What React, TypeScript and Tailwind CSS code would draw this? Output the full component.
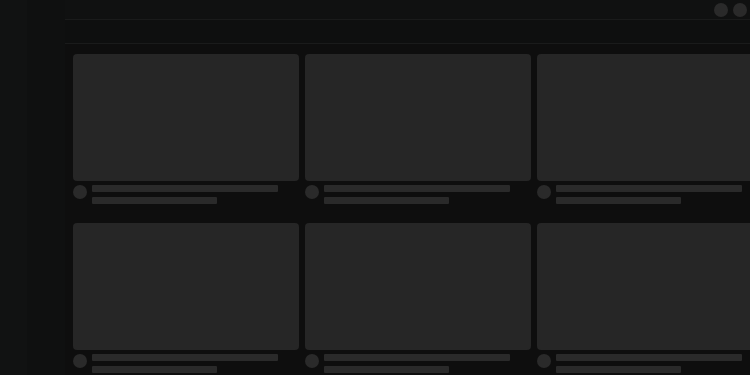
import React from 'react';

const SkeletonCard: React.FC = () => (
  <div className="flex flex-col">
    <div className="h-[127px] rounded-[4px] bg-[#262626]" />
    <div className="mt-[4px] flex gap-[5px]">
      <div className="h-[14px] w-[14px] shrink-0 rounded-full bg-[#2a2a2a]" />
      <div className="flex flex-1 flex-col gap-[5px] pr-[21px]">
        <div className="h-[7px] w-full rounded-[1px] bg-[#2a2a2a]" />
        <div className="h-[7px] w-[125px] rounded-[1px] bg-[#2a2a2a]" />
      </div>
    </div>
  </div>
);

const App: React.FC = () => {
  const cards = Array.from({ length: 6 });

  return (
    <div className="flex h-[375px] w-[750px] overflow-hidden bg-[#0f1010]">
      {/* rail */}
      <div className="w-[27px] shrink-0 bg-[#111212]" />
      <div className="w-[38px] shrink-0 bg-[#0f1010]" />

      <div className="flex min-w-0 flex-1 flex-col">
        <div className="flex h-[20px] shrink-0 items-center justify-end gap-[5px] border-b border-[#1a1b1b] pr-[3px] bg-[#101111]">
          <div className="h-[14px] w-[14px] rounded-full bg-[#2a2a2a]" />
          <div className="h-[14px] w-[14px] rounded-full bg-[#2a2a2a]" />
        </div>
        <div className="h-[24px] shrink-0 border-b border-[#1a1b1b] bg-[#0e0f0f]" />

        <div className="flex-1 bg-[#0e0e0e] pl-[8px] pt-[10px]">
          <div className="grid grid-cols-[226px_226px_226px] gap-x-[6px] gap-y-[19px]">
            {cards.map((_, i) => (
              <SkeletonCard key={i} />
            ))}
          </div>
        </div>
      </div>
    </div>
  );
};

export default App;
